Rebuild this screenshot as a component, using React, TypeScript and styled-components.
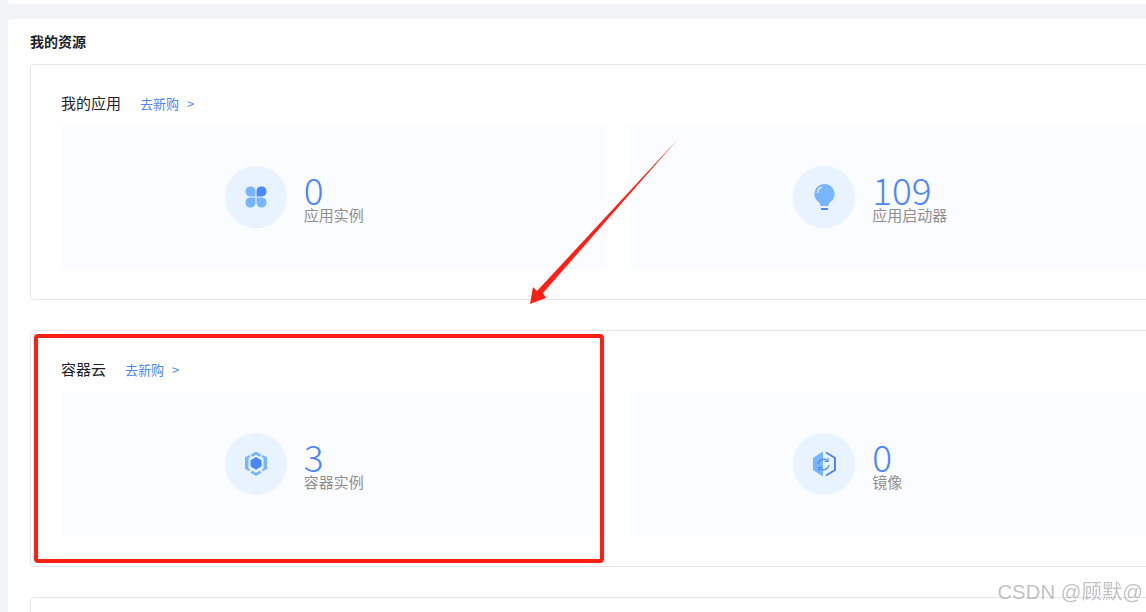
import React from 'react';
import styled, { createGlobalStyle } from 'styled-components';

const GlobalStyle = createGlobalStyle`
  html, body {
    margin: 0;
    width: 1146px;
    height: 612px;
    overflow: hidden;
    background: #f2f3f5;
  }
  body {
    position: relative;
    font-family: "Noto Sans CJK SC", "Noto Sans", sans-serif;
  }
`;

const Page = styled.div`
  width: 1400px;
  height: 612px;
  padding-left: 8px;
  box-sizing: border-box;
  overflow: hidden;
`;

const TopCard = styled.div`
  height: 4px;
  background: #fff;
  border-radius: 0 0 4px 4px;
  margin-bottom: 15px;
`;

const MainCard = styled.section`
  background: #fff;
  border-radius: 4px 4px 0 0;
  padding: 11px 22px 0;
`;

const Heading = styled.h2`
  margin: 0 0 12px;
  font-size: 14px;
  line-height: 22px;
  font-weight: 700;
  color: #1d2129;
`;

const Panel = styled.div`
  border: 1px solid #e5e6eb;
  border-radius: 4px;
  padding: 27px 30px 30px;
  margin-bottom: 30px;
`;

const PanelHead = styled.div<{ $gap: number }>`
  display: flex;
  align-items: center;
  gap: 19px;
  height: 22px;
  margin-bottom: ${(p) => p.$gap}px;
`;

const PanelTitle = styled.span`
  font-size: 15px;
  margin-bottom: 2px;
  color: #1d2129;
`;

const BuyLink = styled.a`
  display: flex;
  gap: 8px;
  font-size: 13px;
  color: #4a87f5;
  text-decoration: none;
`;

const TileRow = styled.div`
  display: grid;
  grid-template-columns: 545.5px 545.5px;
  gap: 23px;
`;

const Tile = styled.div`
  height: 144px;
  padding-left: 30%;
  background: #fbfcff;
  display: flex;
  align-items: center;
  gap: 17px;
`;

const IconCircle = styled.div`
  width: 62px;
  height: 62px;
  border-radius: 50%;
  background: #e9f3ff;
  display: flex;
  align-items: center;
  justify-content: center;
`;

const Stat = styled.div`
  margin-top: 10px;
`;

const StatValue = styled.div`
  font-size: 37px;
  font-weight: 300;
  line-height: 23px;
  margin-bottom: 3px;
  color: #4a87fb;
`;

const StatLabel = styled.div`
  font-size: 15px;
  line-height: 22px;
  color: #8f8f8f;
`;

const Highlight = styled.div`
  position: absolute;
  left: 34px;
  top: 334px;
  width: 570px;
  height: 229px;
  box-sizing: border-box;
  border: 4px solid #ff2015;
  border-radius: 4px;
`;

const ArrowDrawing = styled.svg`
  position: absolute;
  left: 0;
  top: 0;
  pointer-events: none;
`;

const Watermark = styled.div`
  position: absolute;
  right: 3px;
  top: 578px;
  font-family: "Liberation Sans", "Noto Sans CJK SC", sans-serif;
  font-size: 20.4px;
  line-height: 28px;
  color: rgba(120, 120, 120, 0.45);
  filter: blur(0.5px);
`;

const CloverIcon = () => (
  <svg width="24" height="24" viewBox="0 0 24 24">
    <path d="M11.5 11.5H6a5 5 0 1 1 5.5-5.5z" fill="#77b5ff" />
    <path d="M12.5 11.5H18a5 5 0 1 0-5.5-5.5z" fill="#4a87fb" />
    <path d="M11.5 12.5H6a5 5 0 1 0 5.5 5.5z" fill="#77b5ff" />
    <path d="M12.5 12.5H18a5 5 0 1 1-5.5 5.5z" fill="#77b5ff" />
  </svg>
);

const BulbIcon = () => (
  <svg width="32" height="32" viewBox="0 0 32 32">
    <path d="M16.5 3a10 10 0 0 0-6 18c1.500 1.200 1.800 2.500 2 4h8c.2-1.500.5-2.800 2-4a10 10 0 0 0-6-18z" fill="#77b5ff" />
    <path d="M9.500 12a7 7 0 0 1 4.500-6" fill="none" stroke="#dcecff" strokeWidth="1.500" />
    <rect x="13" y="27" width="7" height="2" fill="#4a87fb" />
  </svg>
);

const CubeIcon = () => (
  <svg width="32" height="32" viewBox="0 0 32 32">
    <path d="M16 9l5.500 3.200v6.400L16 21.800l-5.500-3.200v-6.400z" fill="#4a87fb" />
    <path d="M16 3.500l5.500 3.200-1.500 2.300-4-2.300-4 2.300-1.500-2.300z" fill="#77b5ff" />
    <path d="M5 9.500l4.300-2.400 1 1.900L8.500 10.100v10.200l1.800 1.100-1 1.900L5 20.900z" fill="#77b5ff" />
    <path d="M27 9.500l-4.300-2.400-1 1.900 1.800 1.100v10.200l-1.800 1.100 1 1.900 4.300-2.400z" fill="#77b5ff" />
    <path d="M16 28l-5.500-3.200 1.500-2.300 4 2.300 4-2.300 1.500 2.300z" fill="#77b5ff" />
  </svg>
);

const MirrorIcon = () => (
  <svg width="32" height="32" viewBox="0 0 32 32">
    <path d="M15 3.500v25L5 22V10z" fill="#77b5ff" />
    <path d="M18 4.500l9 5.500v12l-9 5.500" fill="none" stroke="#4a87fb" strokeWidth="2" />
    <path
      d="M10 16a5.500 5.500 0 0 1 9-3.500M20 10v3.500h-3.500M21 17a5.500 5.500 0 0 1-9 3.500M11 23v-3.500h3.500"
      fill="none"
      stroke="#4a87fb"
      strokeWidth="1.200"
    />
  </svg>
);

type TileProps = {
  icon: React.ReactNode;
  value: number;
  label: string;
};

function StatTile({ icon, value, label }: TileProps) {
  return (
    <Tile>
      <IconCircle>{icon}</IconCircle>
      <Stat>
        <StatValue>{value}</StatValue>
        <StatLabel>{label}</StatLabel>
      </Stat>
    </Tile>
  );
}

type PanelProps = {
  title: string;
  headGap: number;
  children: React.ReactNode;
};

function ResourcePanel({ title, headGap, children }: PanelProps) {
  return (
    <Panel>
      <PanelHead $gap={headGap}>
        <PanelTitle>{title}</PanelTitle>
        <BuyLink href="#">
          <span>去新购</span>
          <span>&gt;</span>
        </BuyLink>
      </PanelHead>
      <TileRow>{children}</TileRow>
    </Panel>
  );
}

export default function App() {
  return (
    <>
      <GlobalStyle />
      <Page>
        <TopCard />
        <MainCard>
          <Heading>我的资源</Heading>
          <ResourcePanel title="我的应用" headGap={11}>
            <StatTile icon={<CloverIcon />} value={0} label="应用实例" />
            <StatTile icon={<BulbIcon />} value={109} label="应用启动器" />
          </ResourcePanel>
          <ResourcePanel title="容器云" headGap={12}>
            <StatTile icon={<CubeIcon />} value={3} label="容器实例" />
            <StatTile icon={<MirrorIcon />} value={0} label="镜像" />
          </ResourcePanel>
          <Panel />
        </MainCard>
      </Page>
      <Highlight />
      <ArrowDrawing width="1146" height="612" viewBox="0 0 1146 612">
        <path d="M678 139L543 293 546 298 530 304 533 287 537 291z" fill="#ff2015" />
      </ArrowDrawing>
      <Watermark>CSDN @顾默@</Watermark>
    </>
  );
}
